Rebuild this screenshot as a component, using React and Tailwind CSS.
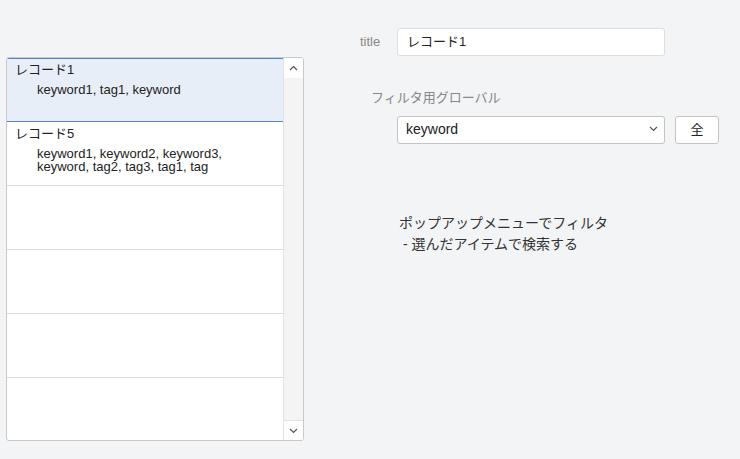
import React from 'react';

const records = [
  { title: 'レコード1', tags: 'keyword1, tag1, keyword', selected: true },
  { title: 'レコード5', tags: 'keyword1, keyword2, keyword3,\nkeyword, tag2, tag3, tag1, tag' },
  null,
  null,
  null,
  null,
];

function Chevron({ up }) {
  return (
    <svg width="9" height="6" viewBox="0 0 9 6" fill="none" stroke="#555" strokeWidth="1.2">
      {up ? <path d="M1 5L4.5 1.5L8 5" /> : <path d="M1 1L4.5 4.5L8 1" />}
    </svg>
  );
}

export default function App() {
  return (
    <div
      className="flex h-[459px] w-[740px] bg-[#f3f4f6] text-[#222]"
      style={{ fontFamily: '"Liberation Sans", "Noto Sans CJK JP", sans-serif' }}
    >
      {/* record list */}
      <div className="ml-[6px] mt-[57px] flex h-[384px] w-[298px] overflow-hidden rounded-[3px] border border-[#c9c9c9] bg-white">
        <div className="flex flex-1 flex-col">
          {records.map((rec, i) => (
            <div
              key={i}
              className={
                rec && rec.selected
                  ? 'h-[64px] shrink-0 border-y border-[#4f84d8] bg-[#e8eef8] pl-[8px] pt-[3px]'
                  : 'h-[64px] shrink-0 border-b border-[#dcdcdc] pl-[8px] pt-[4px] last:border-b-0'
              }
            >
              {rec && (
                <>
                  <div className="text-[13px] leading-[16px]">{rec.title}</div>
                  <div className="mt-[5px] whitespace-pre pl-[22px] text-[13px] leading-[13px]">{rec.tags}</div>
                </>
              )}
            </div>
          ))}
        </div>
        <div className="flex w-[20px] flex-col border-l border-[#e2e2e2] bg-[#f4f4f4]">
          <div className="flex h-[20px] items-center justify-center bg-white">
            <Chevron up />
          </div>
          <div className="flex-1" />
          <div className="flex h-[20px] items-center justify-center border-t border-[#e2e2e2] bg-white">
            <Chevron />
          </div>
        </div>
      </div>

      {/* form */}
      <div className="ml-[56px] flex flex-col">
        <div className="mt-[28px] flex items-center">
          <span className="w-[37px] text-[13px] text-[#888]">title</span>
          <div className="flex h-[28px] w-[268px] items-center rounded-[3px] border border-[#dedede] bg-white pl-[9px] text-[13px]">
            レコード1
          </div>
        </div>

        <div className="ml-[11px] mt-[34px] text-[13px] leading-[16px] text-[#888]">フィルタ用グローバル</div>

        <div className="ml-[37px] mt-[10px] flex items-center gap-[10px]">
          <div className="flex h-[28px] w-[268px] items-center justify-between rounded-[3px] border border-[#c4c4c4] bg-white pb-[2px] pl-[8px] pr-[6px] text-[14px]">
            <span>keyword</span>
            <Chevron />
          </div>
          <div className="flex h-[28px] w-[44px] items-center justify-center rounded-[3px] border border-[#c4c4c4] bg-white text-[13px]">
            全
          </div>
        </div>

        <div className="ml-[39px] mt-[69px] whitespace-pre text-[14px] leading-[21px] text-[#333]">
          <div>ポップアップメニューでフィルタ</div>
          <div> - 選んだアイテムで検索する</div>
        </div>
      </div>
    </div>
  );
}
